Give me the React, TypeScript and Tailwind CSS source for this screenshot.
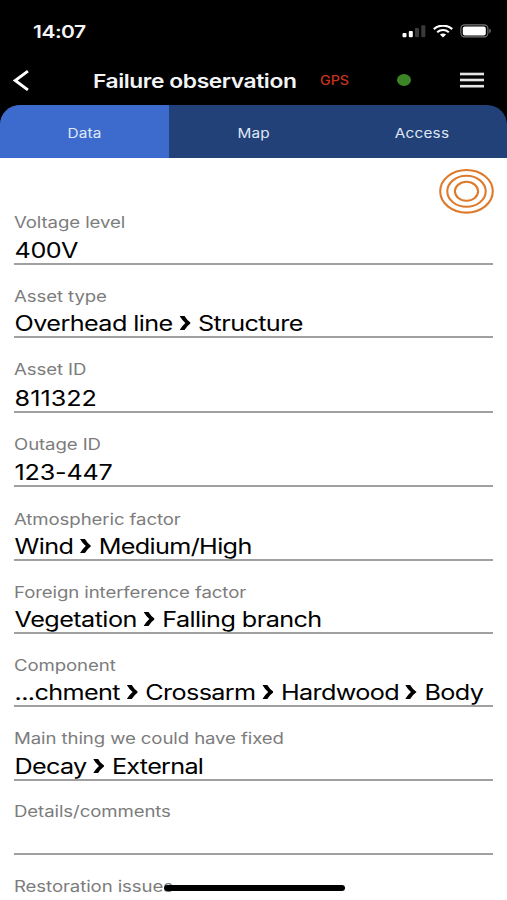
const fields = [
    {label: "Voltage level",               parts: ["400V"],                                        row: "h-[51px]", value: "h-[29px] tracking-[-0.4px]"},
    {label: "Asset type",                  parts: ["Overhead line", "Structure"],                  row: "h-[73px]", value: "h-[28px] tracking-[-0.5px]"},
    {label: "Asset ID",                    parts: ["811322"],                                      row: "h-[75px]", value: "h-[30px]"},
    {label: "Outage ID",                   parts: ["123-447"],                                     row: "h-[74px]", value: "h-[29px] tracking-[-0.2px]"},
    {label: "Atmospheric factor",          parts: ["Wind", "Medium/High"],                         row: "h-[74px]", value: "h-[28px] tracking-[-0.55px]"},
    {label: "Foreign interference factor", parts: ["Vegetation", "Falling branch"],                row: "h-[73px]", value: "h-[28px] tracking-[-0.47px]"},
    {label: "Component",                   parts: ["...chment", "Crossarm", "Hardwood", "Body"],   row: "h-[73px]", value: "h-[28px] tracking-[-0.53px]"},
    {label: "Main thing we could have fixed", parts: ["Decay", "External"],                        row: "h-[74px]", value: "h-[29px] tracking-[-0.6px]"},
    {label: "Details/comments",            parts: [],                                              row: "h-[74px]", value: "h-[30px]"},
];

const tabs = ["Data", "Map", "Access"];

function Chevron() {
    return (
        <svg className="w-[9.5px] h-[14px] mb-[6px] ml-[5.5px] mr-[6.2px] shrink-0" viewBox="0 0 9.5 14" preserveAspectRatio="none">
            <path d="M0 0H4.1Q6 4 9.5 7Q6 10 4.1 14H0Q2 10 4.8 7Q2 4 0 0Z" fill="#000"/>
        </svg>
    );
}

function StatusBar() {
    return (
        <div className="h-[58px] flex items-center justify-between pl-[33px] pr-[15px] pt-[4px]">
            <span className="text-[17.5px] font-semibold text-gray-100 tracking-[-0.4px] origin-left scale-x-[1.2] pt-[2px]">14:07</span>
            <div className="flex items-center">
                <svg width="24" height="14" viewBox="0 0 24 14">
                    <rect x="0.5" y="9" width="4" height="4.2" rx="1" fill="#fff"/>
                    <rect x="6.8" y="7" width="4" height="6.2" rx="1" fill="#fff"/>
                    <rect x="13" y="4" width="4" height="9.2" rx="1" fill="#3a3a3a"/>
                    <rect x="19.3" y="1.2" width="4" height="12" rx="1" fill="#3a3a3a"/>
                </svg>
                <svg className="ml-[7px]" width="20" height="13" viewBox="0 0 20 13" preserveAspectRatio="none">
                    <path d="M0.8 4.1C6 -0.5 14 -0.5 19.2 4.1" fill="none" stroke="#fff" strokeWidth="2.2"/>
                    <path d="M4.2 7.2C7.5 4.3 12.5 4.3 15.8 7.2" fill="none" stroke="#fff" strokeWidth="2.1"/>
                    <path d="M6.9 9.6C8.7 8.1 11.3 8.1 13.1 9.6L10 12.6Z" fill="#fff"/>
                </svg>
                <svg className="ml-[7px]" width="32" height="14" viewBox="0 0 32 14">
                    <rect x="0.9" y="0.9" width="27" height="12" rx="3.6" fill="none" stroke="#777" strokeWidth="1.1"/>
                    <rect x="2.8" y="2.5" width="23" height="8.9" rx="2" fill="#fff"/>
                    <path d="M29.3 4.8C31.3 5.4 31.3 8.6 29.3 9.2Z" fill="#777"/>
                </svg>
            </div>
        </div>
    );
}

function Header() {
    return (
        <div className="h-[47px] flex items-center pl-[12px] pr-[23px] pb-[3px]">
            <svg width="18" height="22" viewBox="0 0 18 22">
                <path d="M15.9 2.1L3.2 11.5L15.9 20.9" fill="none" stroke="#fff" strokeWidth="2.9"/>
            </svg>
            <h1 className="ml-[63px] w-[227px] pt-[4px] text-[19px] font-semibold text-gray-100 tracking-[-0.35px] whitespace-nowrap">
                <span className="inline-block origin-left scale-x-[1.2]">Failure observation</span>
            </h1>
            <span className="w-[77px] pt-[2px] text-[13px] font-medium text-[#c5331f]">
                <span className="inline-block origin-left scale-x-[1.1]">GPS</span>
            </span>
            <span className="w-[14px] h-[12px] rounded-[50%] bg-[#3c8527]"/>
            <svg className="ml-auto" width="24" height="16" viewBox="0 0 24 16" fill="#e5e5e5">
                <rect y="0.7" width="24" height="2.6"/>
                <rect y="6.7" width="24" height="2.6"/>
                <rect y="12.9" width="24" height="2.6"/>
            </svg>
        </div>
    );
}

export default function App() {
    return (
        <div className="relative w-[507px] h-[900px] overflow-hidden bg-black flex flex-col font-['Inter',sans-serif]">
            <StatusBar/>
            <Header/>
            <div className="h-[53px] shrink-0 grid grid-cols-3 rounded-t-[20px] overflow-hidden bg-[#234179]">
                {tabs.map((t, i) => (
                    <div key={t} className={i === 0 ? "bg-[#3d6bcd] flex items-center justify-center" : "flex items-center justify-center"}>
                        <span className="text-[13px] text-[#dfe7f5] tracking-[0.15px] pt-[5px] scale-x-[1.18]">{t}</span>
                    </div>
                ))}
            </div>
            <main className="grow bg-white px-[14px]">
                <div className="h-[56px] flex justify-end pt-[10px]">
                    <svg className="-mr-px" width="56" height="46" viewBox="0 0 56 46" fill="none" stroke="#dd7a2c" strokeWidth="2.1">
                        <ellipse cx="28.5" cy="23.3" rx="26.3" ry="21.3"/>
                        <ellipse cx="28.5" cy="23.3" rx="19.2" ry="15.5"/>
                        <ellipse cx="28.5" cy="23.3" rx="11.6" ry="9.5"/>
                    </svg>
                </div>
                {fields.map(f => (
                    <div key={f.label} className={`${f.row} flex flex-col justify-end border-b-2 border-[#a0a0a0]`}>
                        <div className="h-[22px] shrink-0 leading-[22px] text-[15.5px] tracking-[-0.08px] text-[#7c7c7c] whitespace-nowrap">
                            <span className="inline-block origin-left scale-x-[1.2]">{f.label}</span>
                        </div>
                        <div className={`${f.value} w-max shrink-0 flex items-end pl-[0.5px] leading-[25px] text-[21px] text-black whitespace-nowrap origin-left scale-x-[1.2]`}>
                            {f.parts.map((p, i) => (
                                <span key={p} className="flex items-end">
                                    {i > 0 && <Chevron/>}
                                    {p}
                                </span>
                            ))}
                        </div>
                    </div>
                ))}
                <div className="pt-[21px] leading-[22px] text-[15.5px] tracking-[-0.08px] text-[#7c7c7c]">
                    <span className="inline-block origin-left scale-x-[1.2]">Restoration issues</span>
                </div>
            </main>
            <div className="absolute left-[164px] top-[885px] w-[181px] h-[6px] rounded-full bg-black"/>
        </div>
    );
}
